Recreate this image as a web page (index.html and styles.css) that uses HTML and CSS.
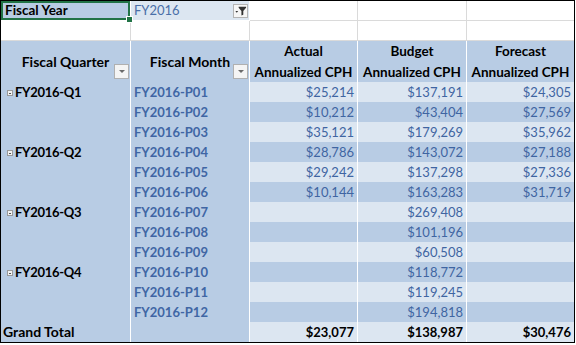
FILE: index.html
```html
<!DOCTYPE html>
<html>
<head>
<meta charset="utf-8">
<link rel="stylesheet" href="styles.css">
</head>
<body>
<div class="sheet">
  <div class="c fy-label">Fiscal Year<span class="handle"></span></div>
  <div class="c fy-value">
    <span>FY2016</span>
    <span class="filter-btn">
      <svg width="14" height="13" viewBox="0 0 14 13">
        <path d="M1.5 7 L4.5 7 L3 9 Z" fill="#333"/>
        <path d="M5 2.5 H13 V3.5 L10 7 V11 L8 12 V7 L5 3.5 Z" fill="#333"/>
      </svg>
    </span>
  </div>
  <div class="c blank"></div>
  <div class="c blank"></div>
  <div class="c blank last"></div>

  <div class="c blank"></div>
  <div class="c blank"></div>
  <div class="c blank"></div>
  <div class="c blank"></div>
  <div class="c blank last"></div>

  <div class="c head single">Fiscal Quarter<span class="dd"></span></div>
  <div class="c head single">Fiscal Month<span class="dd"></span></div>
  <div class="c head"><span>Actual</span><span>Annualized CPH</span></div>
  <div class="c head"><span>Budget</span><span>Annualized CPH</span></div>
  <div class="c head last"><span>Forecast</span><span>Annualized CPH</span></div>

  <div class="c quarter"><span class="minus"></span>FY2016-Q1</div>
  <div class="c month">FY2016-P01</div>
  <div class="c val light">$25,214</div>
  <div class="c val light">$137,191</div>
  <div class="c val light last">$24,305</div>
  <div class="c month">FY2016-P02</div>
  <div class="c val dark">$10,212</div>
  <div class="c val dark">$43,404</div>
  <div class="c val dark last">$27,569</div>
  <div class="c month">FY2016-P03</div>
  <div class="c val light">$35,121</div>
  <div class="c val light">$179,269</div>
  <div class="c val light last">$35,962</div>

  <div class="c quarter"><span class="minus"></span>FY2016-Q2</div>
  <div class="c month">FY2016-P04</div>
  <div class="c val dark">$28,786</div>
  <div class="c val dark">$143,072</div>
  <div class="c val dark last">$27,188</div>
  <div class="c month">FY2016-P05</div>
  <div class="c val light">$29,242</div>
  <div class="c val light">$137,298</div>
  <div class="c val light last">$27,336</div>
  <div class="c month">FY2016-P06</div>
  <div class="c val dark">$10,144</div>
  <div class="c val dark">$163,283</div>
  <div class="c val dark last">$31,719</div>

  <div class="c quarter"><span class="minus"></span>FY2016-Q3</div>
  <div class="c month">FY2016-P07</div>
  <div class="c val light"></div>
  <div class="c val light">$269,408</div>
  <div class="c val light last"></div>
  <div class="c month">FY2016-P08</div>
  <div class="c val dark"></div>
  <div class="c val dark">$101,196</div>
  <div class="c val dark last"></div>
  <div class="c month">FY2016-P09</div>
  <div class="c val light"></div>
  <div class="c val light">$60,508</div>
  <div class="c val light last"></div>

  <div class="c quarter"><span class="minus"></span>FY2016-Q4</div>
  <div class="c month">FY2016-P10</div>
  <div class="c val dark"></div>
  <div class="c val dark">$118,772</div>
  <div class="c val dark last"></div>
  <div class="c month">FY2016-P11</div>
  <div class="c val light"></div>
  <div class="c val light">$119,245</div>
  <div class="c val light last"></div>
  <div class="c month">FY2016-P12</div>
  <div class="c val dark"></div>
  <div class="c val dark">$194,818</div>
  <div class="c val dark last"></div>

  <div class="c total-label">Grand Total</div>
  <div class="c month"></div>
  <div class="c val light total">$23,077</div>
  <div class="c val light total">$138,987</div>
  <div class="c val light total last">$30,476</div>
</div>
</body>
</html>
```

FILE: styles.css
```css
html, body {
  margin: 0;
  padding: 0;
  background: #ffffff;
}

.sheet {
  display: grid;
  grid-template-columns: 130px 119px 108px 109px 107px;
  grid-template-rows: 20px 20px 41px repeat(13, 20px);
  width: 575px;
  box-sizing: border-box;
  border: 1px solid #000;
  font-family: Lato, "Open Sans", sans-serif;
  font-size: 13px;
  line-height: 20px;
  color: #000;
}

.c {
  box-sizing: border-box;
  border-right: 1px solid #ffffff;
  white-space: nowrap;
  overflow: visible;
  min-width: 0;
}

.c.last {
  border-right: none;
}

.fy-label {
  position: relative;
  background: #b8cce4;
  font-weight: 700;
  font-size: 13.5px;
  padding-left: 4px;
  line-height: 19px;
  box-shadow: inset 0 0 0 2px #217346;
  border-bottom: 1px solid #ffffff;
}

.handle {
  position: absolute;
  right: -3px;
  bottom: -3px;
  width: 5px;
  height: 5px;
  background: #217346;
  border: 1px solid #ffffff;
  z-index: 2;
}

.fy-value {
  display: flex;
  align-items: center;
  justify-content: space-between;
  background: #dce6f1;
  color: #4a6fa8;
  padding-left: 3px;
  padding-right: 1px;
  border-bottom: 1px solid #ffffff;
  line-height: 19px;
}

.filter-btn {
  display: flex;
  align-items: center;
  justify-content: center;
  width: 15px;
  height: 14px;
  box-sizing: border-box;
  background: #f6f6f6;
  border: 1px solid #b4b4b4;
}

.blank {
  background: #ffffff;
  border-right: 1px solid #dadada;
  border-bottom: 1px solid #dadada;
}

.blank.last {
  border-right: none;
}

.head {
  position: relative;
  background: #b8cce4;
  font-weight: 700;
  display: flex;
  flex-direction: column;
  align-items: center;
  justify-content: center;
  line-height: 21px;
  font-size: 13.5px;
}

.head.single {
  padding-bottom: 1px;
  font-size: 14px;
}

.dd {
  position: absolute;
  right: 1px;
  bottom: 3px;
  width: 15px;
  height: 15px;
  box-sizing: border-box;
  background: #f4f4f4;
  border: 1px solid #b0b0b0;
}

.dd::after {
  content: "";
  position: absolute;
  left: 4px;
  top: 5px;
  border-left: 3px solid transparent;
  border-right: 3px solid transparent;
  border-top: 3px solid #6a6a6a;
}

.quarter {
  grid-row: span 3;
  background: #b8cce4;
  font-weight: 700;
  padding-left: 6px;
  display: flex;
  align-items: flex-start;
  letter-spacing: -0.3px;
}

.minus {
  position: relative;
  display: inline-block;
  width: 6px;
  height: 6px;
  box-sizing: border-box;
  border: 1px solid #9a9a9a;
  background: #f2f2f2;
  margin-top: 8px;
  margin-right: 2px;
}

.minus::after {
  content: "";
  position: absolute;
  left: 1px;
  top: 1.5px;
  width: 2px;
  height: 1px;
  background: #555;
}

.month {
  background: #b8cce4;
  color: #4066a4;
  font-weight: 700;
  padding-left: 3px;
}

.total-label {
  background: #b8cce4;
  font-weight: 700;
  font-size: 14px;
  padding-left: 2px;
}

.val {
  text-align: right;
  padding-right: 3px;
  color: #3f65a2;
}

.val.light {
  background: #dce6f1;
}

.val.dark {
  background: #b8cce4;
}

.val.total {
  color: #000;
  font-weight: 700;
}
```
